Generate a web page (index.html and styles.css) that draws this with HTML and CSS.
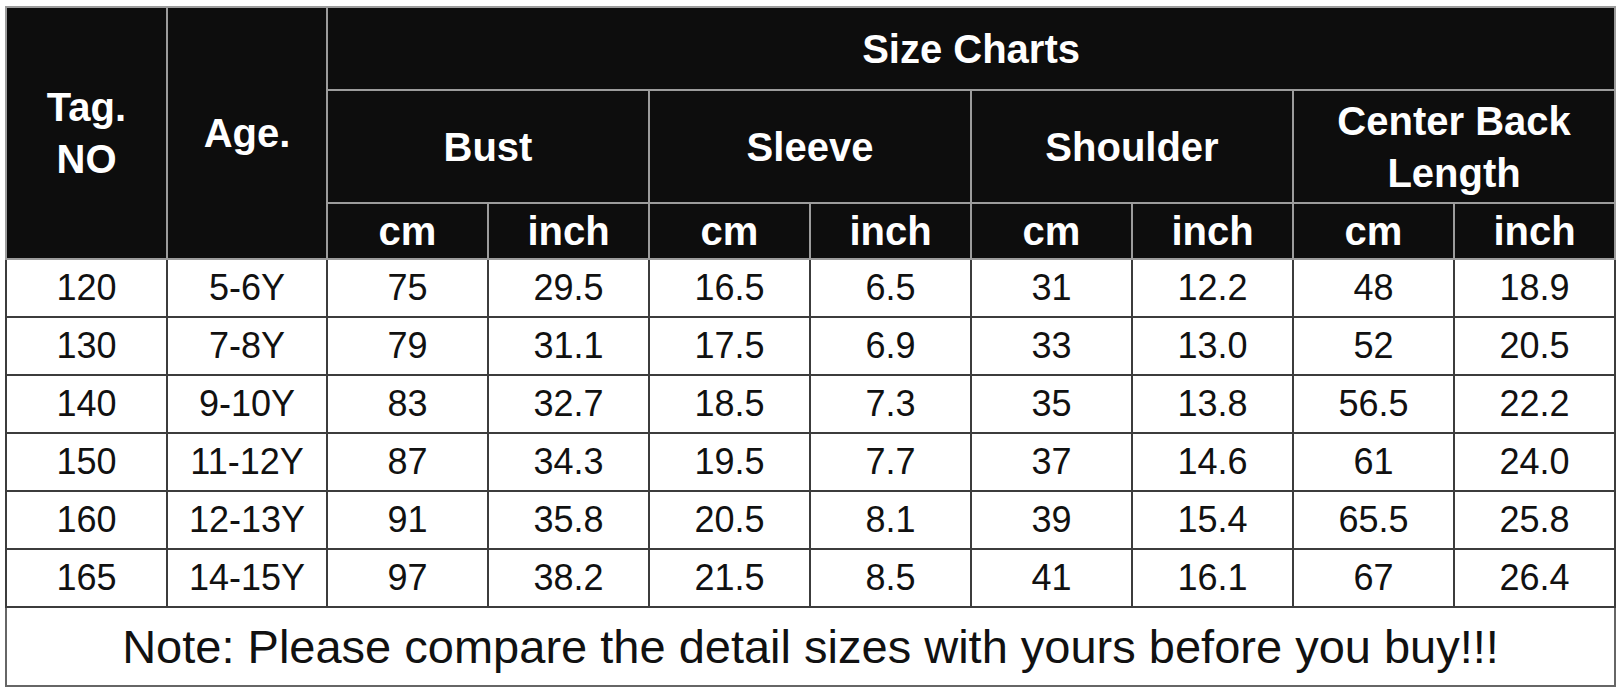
FILE: index.html
```html
<!DOCTYPE html>
<html>
<head>
<meta charset="utf-8">
<link rel="stylesheet" href="styles.css">
</head>
<body>
<table class="chart">
  <colgroup>
    <col class="c-tag"><col class="c-age">
    <col class="c"><col class="c"><col class="c"><col class="c">
    <col class="c"><col class="c"><col class="c"><col class="c">
  </colgroup>
  <thead>
    <tr class="h1">
      <th rowspan="3" class="two">Tag.<br>NO</th>
      <th rowspan="3">Age.</th>
      <th colspan="8">Size Charts</th>
    </tr>
    <tr class="h2">
      <th colspan="2">Bust</th>
      <th colspan="2">Sleeve</th>
      <th colspan="2">Shoulder</th>
      <th colspan="2" class="two">Center Back<br>Length</th>
    </tr>
    <tr class="h3">
      <th>cm</th><th>inch</th><th>cm</th><th>inch</th>
      <th>cm</th><th>inch</th><th>cm</th><th>inch</th>
    </tr>
  </thead>
  <tbody>
    <tr><td>120</td><td>5-6Y</td><td>75</td><td>29.5</td><td>16.5</td><td>6.5</td><td>31</td><td>12.2</td><td>48</td><td>18.9</td></tr>
    <tr><td>130</td><td>7-8Y</td><td>79</td><td>31.1</td><td>17.5</td><td>6.9</td><td>33</td><td>13.0</td><td>52</td><td>20.5</td></tr>
    <tr><td>140</td><td>9-10Y</td><td>83</td><td>32.7</td><td>18.5</td><td>7.3</td><td>35</td><td>13.8</td><td>56.5</td><td>22.2</td></tr>
    <tr><td>150</td><td>11-12Y</td><td>87</td><td>34.3</td><td>19.5</td><td>7.7</td><td>37</td><td>14.6</td><td>61</td><td>24.0</td></tr>
    <tr><td>160</td><td>12-13Y</td><td>91</td><td>35.8</td><td>20.5</td><td>8.1</td><td>39</td><td>15.4</td><td>65.5</td><td>25.8</td></tr>
    <tr><td>165</td><td>14-15Y</td><td>97</td><td>38.2</td><td>21.5</td><td>8.5</td><td>41</td><td>16.1</td><td>67</td><td>26.4</td></tr>
    <tr class="note"><td colspan="10">Note: Please compare the detail sizes with yours before you buy!!!</td></tr>
  </tbody>
</table>
</body>
</html>
```

FILE: styles.css
```css
html, body {
  margin: 0;
  padding: 0;
  background: #ffffff;
}

body {
  padding: 6px 0 0 5px;
  font-family: "Liberation Sans", Arial, sans-serif;
}

.chart {
  border-collapse: collapse;
  table-layout: fixed;
  width: 1608px;
}

.c-tag { width: 161px; }
.c-age { width: 160px; }
.c { width: 161px; }

.chart th {
  background: #0d0d0d;
  color: #ffffff;
  font-weight: bold;
  font-size: 40px;
  line-height: 52px;
  border: 2px solid #9c9c9c;
  padding: 0;
  text-align: center;
  vertical-align: middle;
}

.chart td {
  color: #111111;
  font-size: 36px;
  line-height: 40px;
  border: 2px solid #3c3c3c;
  padding: 0;
  text-align: center;
  vertical-align: middle;
  height: 56px;
}

.h1 th { height: 81px; }
.h2 th { height: 111px; }
.h3 th { height: 54px; }

.chart .note td {
  font-size: 47px;
  line-height: 50px;
  height: 77px;
  border-color: #666666;
}
```
